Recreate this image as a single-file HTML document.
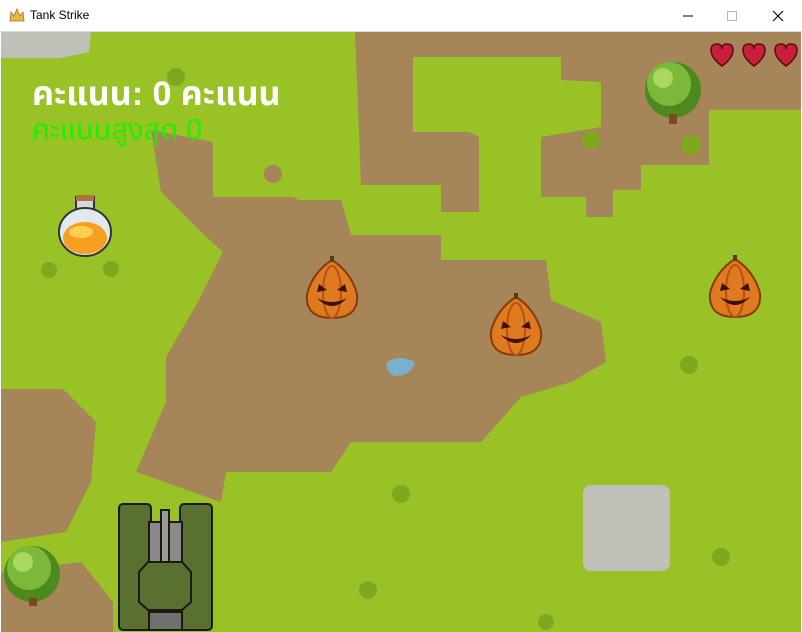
<!DOCTYPE html>
<html><head><meta charset="utf-8"><style>
html,body{margin:0;padding:0;width:802px;height:632px;overflow:hidden;background:#fff;font-family:"Liberation Sans",sans-serif}
#tb{position:absolute;left:0;top:0;width:802px;height:31px;background:#fff;border-bottom:1px solid #ddd}
#tb .t{position:absolute;left:30px;top:8px;font-size:12px;color:#000}
#game{position:absolute;left:1px;top:32px;width:800px;height:600px;overflow:hidden}
.sc{position:absolute;left:31px;top:38px;color:#fff;font-weight:bold;font-size:34px;font-family:"Liberation Sans","Noto Sans Thai","Garuda","Loma",sans-serif;white-space:nowrap}
.hs{position:absolute;left:31px;top:77px;color:#22ee00;font-size:29px;font-family:"Liberation Sans","Noto Sans Thai","Garuda","Loma",sans-serif;white-space:nowrap}
</style></head><body>
<div id="tb">
<svg style="position:absolute;left:9px;top:8px" width="16" height="14"><path d="M1 13 L2 4 L5 8 L8 1 L11 8 L14 4 L15 13Z" fill="#e8b840" stroke="#a07020" stroke-width="0.8"/></svg>
<span class="t">Tank Strike</span>
<svg style="position:absolute;left:680px;top:8px" width="115" height="16"><line x1="3" y1="8" x2="13" y2="8" stroke="#000"/><rect x="47.5" y="3.5" width="9" height="9" fill="none" stroke="#bbb"/><path d="M93 3 L103 13 M103 3 L93 13" stroke="#000" stroke-width="1.1"/></svg>
</div>
<div id="game">
<svg width="800" height="600" style="position:absolute;left:0;top:0">
<rect width="800" height="600" fill="#99c226"/>
<g fill="#a68558">
<path d="M354 0 L800 0 L800 78 L708 78 L708 133 L640 133 L640 158 L612 158 L612 185 L585 185 L585 165 L540 165 L540 105 L600 95 L600 50 L560 48 L560 25 L412 25 L412 100 L468 100 L478 105 L478 180 L440 180 L440 153 L360 153 L358 100 Z"/>
<path d="M150 98 L212 110 L212 165 L292 165 L298 168 L340 168 L350 203 L440 203 L440 228 L545 228 L550 268 L600 290 L605 330 L570 350 L520 365 L480 410 L350 410 L330 440 L225 440 L220 470 L135 440 L165 370 L165 325 L198 268 L222 220 L200 200 L160 160 Z"/>
<path d="M0 357 L62 357 L95 390 L90 450 L65 500 L0 510 Z"/>
<path d="M0 540 L80 530 L112 570 L112 600 L0 600 Z"/>
<circle cx="272" cy="142" r="9"/>
</g>
<g fill="#c0c0b8">
<path d="M0 0 L90 0 L88 20 L60 26 L0 26Z"/>
<rect x="582" y="453" width="87" height="86" rx="8"/>
</g>
<path d="M386 330 Q398 322 414 330 Q410 344 394 344 Q384 340 386 330Z" fill="#7ab0cc"/>
<g fill="#7fa81e">
<circle cx="48" cy="238" r="8"/><circle cx="110" cy="237" r="8"/><circle cx="400" cy="462" r="9"/><circle cx="720" cy="525" r="9"/><circle cx="688" cy="333" r="9"/><circle cx="590" cy="108" r="9"/><circle cx="367" cy="558" r="9"/><circle cx="545" cy="590" r="8"/><circle cx="690" cy="113" r="10"/><circle cx="175" cy="45" r="9"/>
</g>
<g><circle cx="672" cy="58" r="28" fill="#4d8a1e"/><circle cx="668" cy="52" r="22" fill="#7cb83a"/><circle cx="662" cy="46" r="10" fill="#a8d860"/><rect x="668" y="82" width="8" height="10" fill="#7a4a20"/></g>
<g><circle cx="31" cy="542" r="28" fill="#4d8a1e"/><circle cx="28" cy="536" r="22" fill="#7cb83a"/><circle cx="22" cy="530" r="10" fill="#a8d860"/><rect x="28" y="566" width="8" height="8" fill="#7a4a20"/></g>
<g><rect x="75" y="165" width="18" height="14" fill="#d0d8e0" stroke="#333" stroke-width="2"/><rect x="75" y="163" width="18" height="6" fill="#b07040"/><ellipse cx="84" cy="200" rx="26" ry="24" fill="#e0e8f0" stroke="#333" stroke-width="2"/><ellipse cx="84" cy="206" rx="22" ry="16" fill="#f5a020"/><ellipse cx="80" cy="200" rx="12" ry="6" fill="#ffd050"/></g>
<g id="pk"><path d="M331 228 Q312 240 306 262 Q304 286 331 286 Q358 286 356 262 Q350 240 331 228Z" fill="#e07a20" stroke="#8a3a08" stroke-width="2"/><ellipse cx="331" cy="260" rx="9" ry="26" fill="none" stroke="#b85010" stroke-width="2"/><path d="M318 252 L326 258 L316 260Z M344 252 L336 258 L346 260Z" fill="#401000"/><path d="M316 266 Q331 282 346 266 Q331 274 316 266Z" fill="#401000"/><rect x="329" y="224" width="4" height="6" fill="#5a3a10"/></g>
<use href="#pk" x="184" y="37"/>
<use href="#pk" x="403" y="-1"/>
<g fill="#c8203a" stroke="#5a0a14" stroke-width="1.5"><path d="M710 18 Q710 12 716 12 Q721 12 721 17 Q721 12 726 12 Q732 12 732 18 Q732 26 721 34 Q710 26 710 18Z"/><path d="M742 18 Q742 12 748 12 Q753 12 753 17 Q753 12 758 12 Q764 12 764 18 Q764 26 753 34 Q742 26 742 18Z"/><path d="M774 18 Q774 12 780 12 Q785 12 785 17 Q785 12 790 12 Q796 12 796 18 Q796 26 785 34 Q774 26 774 18Z"/></g>
<g stroke="#1a1a10" stroke-width="2">
<rect x="118" y="472" width="32" height="126" rx="4" fill="#5a7030"/>
<rect x="179" y="472" width="32" height="126" rx="4" fill="#5a7030"/>
<rect x="148" y="490" width="33" height="90" fill="#8a8a88"/>
<rect x="160" y="478" width="8" height="70" fill="#9a9a98"/>
<path d="M147 530 L181 530 L190 540 L190 570 L181 578 L147 578 L138 570 L138 540Z" fill="#5a7030"/>
<rect x="148" y="580" width="33" height="18" fill="#707070"/>
</g>
</svg>
<div class="sc">คะแนน: 0 คะแนน</div>
<div class="hs">คะแนนสูงสุด 0</div>
</div>
</body></html>
